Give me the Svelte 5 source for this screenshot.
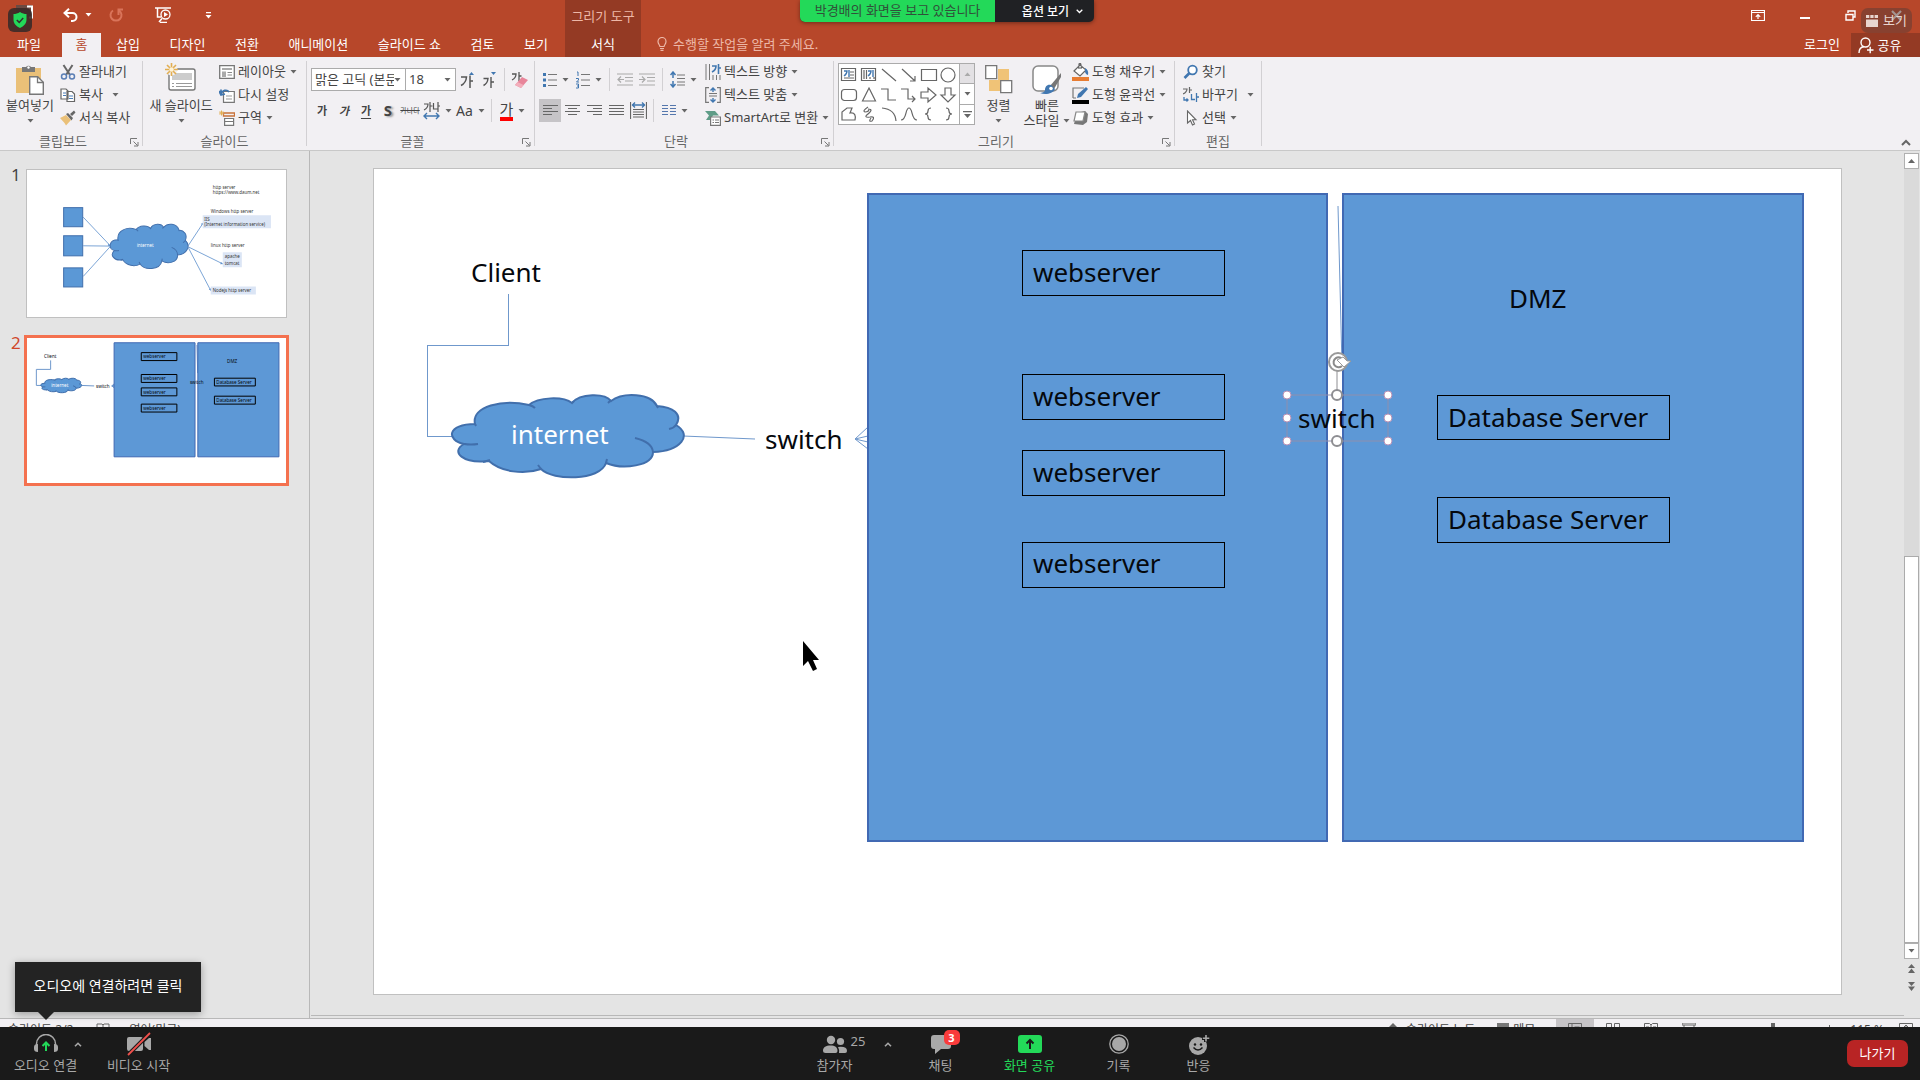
<script>
  const tabsBefore = ['삽입', '디자인', '전환', '애니메이션', '슬라이드 쇼', '검토', '보기'];
  const webservers = [
    { y: 249, h: 45, base: 281 },
    { y: 373, h: 45, base: 405 },
    { y: 449, h: 45, base: 481 },
    { y: 541, h: 45, base: 572 }
  ];
  const databases = [
    { y: 394, h: 44, base: 426 },
    { y: 496, h: 45, base: 528 }
  ];
  const handles = [
    [1286, 394], [1387, 394], [1286, 417], [1387, 417], [1286, 440], [1387, 440]
  ];
  let fontName = $state('malgun');
  let fontSize = $state('18');
</script>

{#snippet caret()}
  <svg class="caret" width="7" height="4" viewBox="0 0 7 4" aria-hidden="true"><path d="M0.5 0h6L3.5 3.6z" fill="currentColor" /></svg>
{/snippet}

{#snippet launcher(label)}
  <button class="launcher" aria-label={label}>
    <svg width="9" height="9" viewBox="0 0 9 9"><path d="M.5 6V.5H7M3.500 3.500l4 4M8 4v4H4" fill="none" stroke="#777" /></svg>
  </button>
{/snippet}

{#snippet cloud()}
  <path class="cloud" d="M474 423C446 423 445 439 463 443C449 451 462 463 488 460C500 471 523 474 540 468C552 480 599 480 605 462C622 469 652 465 652 451C680 450 692 434 675 424C682 413 672 406 656 405C650 392 622 391 610 400C604 392 579 392 571 402C562 395 537 396 528 404C502 398 470 405 474 423Z" />
  <path class="cloud inner" d="M528 404q4 1 6 3M463 443q7 1 14 0M482 461l7-2M537 464l3 4M605 462l1-4M668 428q5-1 7-4M634 437q17 4 18 14M571 402l2-2M607 402l3-3M656 405l1 2M474 423l1 2" />
{/snippet}

{#snippet diagram()}
  <polyline class="wire" points="507,293 507,344 426,344 426,435 453,435" />
  <path class="wire" d="M682 435L754 438M867 426L854 438L867 448M867 435L854 438L867 441" />
  <path class="wire" d="M1337 205L1341 365" />
  {@render cloud()}
  <text x="470" y="281">Client</text>
  <text class="light" x="510" y="443">internet</text>
  <text x="764" y="448">switch</text>
  <rect class="zone" x="867" y="193" width="459" height="647" />
  <rect class="zone" x="1342" y="193" width="460" height="647" />
  {#each webservers as s}
    <rect class="node" x="1021" y={s.y} width="202" height={s.h} />
    <text x="1032" y={s.base}>webserver</text>
  {/each}
  <text x="1508" y="307">DMZ</text>
  {#each databases as s}
    <rect class="node" x="1436" y={s.y} width="232" height={s.h} />
    <text x="1447" y={s.base}>Database Server</text>
  {/each}
  <text x="1297" y="427">switch</text>
{/snippet}

<div class="app">
  <header>
    <div class="quick">
      <button class="save" aria-label="저장">
        <svg width="20" height="24" viewBox="0 0 20 24"><path d="M2 2h16v12H2z" fill="#6b4a42" /><path d="M13 3.500h5v11h-3" fill="none" stroke="#fff" stroke-width="2" /></svg>
      </button>
      <button class="undo" aria-label="실행 취소">
        <svg width="16" height="15" viewBox="0 0 16 15"><path d="M2 5h7.500a4 4 0 0 1 0 8H8" fill="none" stroke="#fff" stroke-width="2" /><path d="M6 .8L1.500 5 6 9.200" fill="none" stroke="#fff" stroke-width="2" /></svg>
      </button>
      <button class="mini" aria-label="실행 취소 목록">{@render caret()}</button>
      <button class="redo" aria-label="다시 실행">
        <svg width="15" height="15" viewBox="0 0 15 15"><path d="M10 2.500A5.500 5.500 0 1 1 4 2.500M9.500 7V1.500H14" fill="none" stroke="#d9745a" stroke-width="2" /></svg>
      </button>
      <button class="show" aria-label="처음부터 시작">
        <svg width="17" height="16" viewBox="0 0 17 16"><path d="M0 1h16M2.500 1v9H6M4 15l3-3.500M12 15.500H5" fill="none" stroke="#fff" stroke-width="1.500" /><circle cx="10.500" cy="7.500" r="4.500" fill="#b7472a" stroke="#fff" stroke-width="1.300" /><path d="M9 5l4 2.500L9 10z" fill="#fff" /></svg>
      </button>
      <button class="custom" aria-label="빠른 실행 도구 모음 사용자 지정">
        <svg width="7" height="7" viewBox="0 0 7 7"><path d="M1 0h5v1.200H1zM.5 3h6L3.500 6.500z" fill="#fff" /></svg>
      </button>
    </div>
    <nav class="tabs" aria-label="리본 탭">
      <button class="tab file">파일</button>
      <button class="tab active">홈</button>
      {#each tabsBefore as t}<button class="tab">{t}</button>{/each}
    </nav>
    <div class="context">
      <span>그리기 도구</span>
      <button>서식</button>
    </div>
    <div class="window">
      <button aria-label="리본 메뉴 표시 옵션"><svg width="14" height="11" viewBox="0 0 14 11"><path d="M.5.5h13v10H.5zM0 2.500h14M7 9V5M4.800 6.800L7 4.600l2.200 2.200" fill="none" stroke="#fff" stroke-width="1.200" /></svg></button>
      <button aria-label="최소화"><svg width="10" height="11" viewBox="0 0 10 11"><path d="M0 7h10v2H0z" fill="#fff" /></svg></button>
      <button aria-label="이전 크기로 복원"><svg width="11" height="11" viewBox="0 0 11 11"><path d="M3 3V1h7v6H8M1 4.500h7V10H1z" fill="none" stroke="#fff" stroke-width="1.400" /></svg></button>
      <button aria-label="닫기"><svg width="11" height="11" viewBox="0 0 11 11"><path d="M1 1l9 9M10 1l-9 9" stroke="#eee" stroke-width="2.200" /></svg></button>
    </div>
    <div class="tellrow">
      <button class="tell">
        <svg width="12" height="14" viewBox="0 0 12 14"><path d="M4 9.500C3.500 7.500 2 7 2 4.500a4 4 0 0 1 8 0C10 7 8.500 7.500 8 9.500zM4 11.500h4M4.500 13.300h3" fill="none" stroke="#edb8a8" stroke-width="1.200" /></svg>
        수행할 작업을 알려 주세요.
      </button>
      <button class="login">로그인</button>
      <button class="share">
        <svg width="16" height="17" viewBox="0 0 16 17"><circle cx="7.500" cy="5.500" r="4.500" fill="none" stroke="#fff" stroke-width="1.400" /><path d="M1 16c0-4 2-6 5-6.500M9 13h6.500M12.200 9.800v6.500" fill="none" stroke="#fff" stroke-width="1.400" /></svg>
        공유
      </button>
    </div>
    <div class="banner">
      <span class="watching">박경배의 화면을 보고 있습니다</span>
      <button>옵션 보기 <svg width="7" height="5" viewBox="0 0 7 5"><path d="M.7.7l2.800 2.800L6.300.7" fill="none" stroke="#fff" stroke-width="1.300" /></svg></button>
    </div>
    <div class="shield">
      <svg width="16" height="16" viewBox="0 0 16 16" role="img" aria-label="암호화됨"><path d="M8 0C10 1.500 12.500 2 14.500 2v5.500c0 4-2.500 6.500-6.500 8.500C4 14 1.500 11.500 1.500 7.500V2C3.500 2 6 1.500 8 0z" fill="#23d959" /><path d="M4.800 8l2.400 2.400 4-4.300" fill="none" stroke="#33302f" stroke-width="1.500" /></svg>
    </div>
    <button class="viewbtn">
      <svg width="12" height="12" viewBox="0 0 12 12"><path d="M0 0h3.300v3H0zM4.300 0h3.300v3H4.300zM8.600 0H12v3H8.600zM0 4.500h12V12H0z" fill="#e8d5cf" /></svg>
      보기
    </button>
  </header>

  <section class="ribbon" aria-label="리본">
    <div class="group clip">
      <div class="body">
        <button class="large">
          <svg width="30" height="32" viewBox="0 0 30 32"><path d="M1 5h25v25H1z" fill="#eac078" /><path d="M7 4h4a3 3 0 0 1 5 0h4v5H7z" fill="#777" /><circle cx="13.500" cy="4.500" r="1.200" fill="#fff" /><path d="M14.700 13.700h8l5.600 5.600v12H14.700z" fill="#fff" stroke="#777" stroke-width="1.400" /><path d="M22.500 14v5.500h6" fill="none" stroke="#777" stroke-width="1.300" /></svg>
          <span>붙여넣기</span>{@render caret()}
        </button>
        <div class="stack">
          <button class="small"><svg width="16" height="16" viewBox="0 0 16 16"><path d="M3.500 1l6.500 10M12.500 1L6 11" stroke="#666" stroke-width="2" /><circle cx="4" cy="12.500" r="2.500" fill="none" stroke="#5b7fb5" stroke-width="1.500" /><circle cx="12" cy="12.500" r="2.500" fill="none" stroke="#5b7fb5" stroke-width="1.500" /></svg><span>잘라내기</span></button>
          <button class="small"><svg width="16" height="16" viewBox="0 0 16 16"><path d="M1 2h5l2 2v8H1zM7 4.500h5l2.500 2.500v7.500H7z" fill="#fff" stroke="#666" stroke-width="1.200" /><path d="M3 6h3M3 8.500h3M9 9h4M9 11.500h4" stroke="#4a7db8" /></svg><span>복사</span><i></i>{@render caret()}</button>
          <button class="small"><svg width="16" height="16" viewBox="0 0 16 16"><path d="M0 8l6-3 5 5-5 5.500L4.500 13z" fill="#eac078" /><path d="M6 4l2-1 5 5-1.500 2.500zM10 4l4-3.500 1.500 2L12 6z" fill="#666" /></svg><span>서식 복사</span></button>
        </div>
      </div>
      <div class="title launch">클립보드{@render launcher('클립보드 옵션')}</div>
    </div>

    <div class="group slides">
      <div class="body">
        <button class="large">
          <svg width="32" height="32" viewBox="0 0 32 32"><rect x="4" y="6" width="26" height="21" rx="2" fill="#fff" stroke="#777" stroke-width="1.400" /><path d="M7 10h20v7H7z" fill="#ccc" /><path d="M7 20.500h2M11 20.500h16M7 23.500h2M11 23.500h16" stroke="#999" /><circle cx="6.500" cy="6.500" r="6" fill="#f2f0f3" /><path d="M6.500 0v13M0 6.500h13M2 2l9 9M11 2l-9 9" stroke="#e2ae52" stroke-width="1.600" /><circle cx="6.500" cy="6.500" r="2.200" fill="#fff3d6" /></svg>
          <span>새 슬라이드</span>{@render caret()}
        </button>
        <div class="stack">
          <button class="small"><svg width="16" height="16" viewBox="0 0 16 16"><path d="M.7 1.700h14.600v12.600H.7z" fill="#fff" stroke="#777" stroke-width="1.300" /><path d="M3 4h10v2H3zM3 7.500h4V13H3z" fill="#aaa" /><path d="M8.500 8.500H13M8.500 11H13" stroke="#888" /></svg><span>레이아웃</span>{@render caret()}</button>
          <button class="small"><svg width="16" height="16" viewBox="0 0 16 16"><path d="M4.500 4.500h10.800v10.800H4.500z" fill="#fff" stroke="#777" stroke-width="1.200" /><path d="M7 9h6M7 12h6" stroke="#999" /><path d="M2 8V2.500M2 7.500C3 3 8 2 10 5M0 4l2 4 4-1" fill="none" stroke="#4177b0" stroke-width="1.700" /></svg><span>다시 설정</span></button>
          <button class="small"><svg width="16" height="16" viewBox="0 0 16 16"><path d="M4.500 3h11v3h-11z" fill="none" stroke="#c8723a" stroke-width="1.300" /><path d="M5.600 8.500h9v6.800h-9zM5.600 11.500h9" fill="#fff" stroke="#777" stroke-width="1.200" /><path d="M0 3h5M2.500.5v5M.8 1.300l3.400 3.400M4.200 1.300L.8 4.700" stroke="#e2ae52" /></svg><span>구역</span>{@render caret()}</button>
        </div>
      </div>
      <div class="title">슬라이드</div>
    </div>

    <div class="group font">
      <div class="body">
        <div class="rows">
          <div class="row">
            <label class="combo name"><select aria-label="글꼴" bind:value={fontName}><option value="malgun">맑은 고딕 (본문)</option></select>{@render caret()}</label>
            <label class="combo size"><select aria-label="글꼴 크기" bind:value={fontSize}><option value="18">18</option></select>{@render caret()}</label>
            <button class="tool" aria-label="글꼴 크기 크게"><svg width="14" height="18" viewBox="0 0 14 18"><path d="M9 4l2.500-3L14 4z" fill="#4177b0" /><path d="M1 6h5.500Q6 12 1 14.500M10 4.500V17M10 10h3" fill="none" stroke="#555" stroke-width="1.500" /></svg></button>
            <button class="tool" aria-label="글꼴 크기 작게"><svg width="14" height="18" viewBox="0 0 14 18"><path d="M9 1h5l-2.500 3z" fill="#4177b0" /><path d="M1.500 7.500H6Q5.500 12.500 1.500 14.500M9 6v11M9 11h3" fill="none" stroke="#555" stroke-width="1.400" /></svg></button>
            <span class="sep"></span>
            <button class="tool" aria-label="모든 서식 지우기"><svg width="18" height="18" viewBox="0 0 18 18"><path d="M1 3h4Q5 7 1 9M8 1v9M8 5h2.500" fill="none" stroke="#555" stroke-width="1.300" /><path d="M4 14l7-8 6 3-7 8z" fill="#e8859a" /><path d="M4 14l2.500-3 6 3-2.500 3z" fill="#f3aebb" /></svg></button>
          </div>
          <div class="row">
            <button class="tool b">가</button>
            <button class="tool b it">가</button>
            <button class="tool b un">가</button>
            <button class="tool sh">S</button>
            <button class="tool st">가나다</button>
            <button class="tool w33" aria-label="문자 간격"><svg width="17" height="19" viewBox="0 0 17 19"><path d="M1 3h4Q5 7 1 9M7 1v10M7 5h2.500M10.500 2v6h4M15 1v10M15 5h2" fill="none" stroke="#555" stroke-width="1.200" /><path d="M1 15h15M4 12l-3 3 3 3M13 12l3 3-3 3" fill="none" stroke="#4177b0" stroke-width="1.400" /></svg>{@render caret()}</button>
            <button class="tool w33 aa">Aa{@render caret()}</button>
            <span class="sep"></span>
            <button class="tool w33 color"><span>가</span>{@render caret()}</button>
          </div>
        </div>
      </div>
      <div class="title launch">글꼴{@render launcher('글꼴 옵션')}</div>
    </div>

    <div class="group para">
      <div class="body">
        <div class="rows">
          <div class="row">
            <button class="tool w33" aria-label="글머리 기호"><svg width="14" height="16" viewBox="0 0 14 16"><path d="M0 1h3v3H0zM0 6.500h3v3H0zM0 12h3v3H0z" fill="#4177b0" /><path d="M5 2.500h9M5 8h9M5 13.500h9" stroke="#777" /></svg>{@render caret()}</button>
            <button class="tool w33" aria-label="번호 매기기"><svg width="14" height="18" viewBox="0 0 14 18"><path d="M1 1h1v4M0 7.500h2.500V9L.5 11H3M0 13h2.500v4H0M1 15h1.500" fill="none" stroke="#4177b0" /><path d="M5 3.500h9M5 9h9M5 14.500h9" stroke="#777" /></svg>{@render caret()}</button>
            <span class="sep"></span>
            <button class="tool" aria-label="목록 수준 줄임"><svg width="16" height="13" viewBox="0 0 16 13"><path d="M0 1h16M8 4.500h8M8 8h8M0 12h16M1 6.500h6M4 3.500l-3 3 3 3" fill="none" stroke="#aaa" stroke-width="1.200" /></svg></button>
            <button class="tool" aria-label="목록 수준 늘림"><svg width="16" height="13" viewBox="0 0 16 13"><path d="M0 1h16M8 4.500h8M8 8h8M0 12h16M0 6.500h6M3 3.500l3 3-3 3" fill="none" stroke="#aaa" stroke-width="1.200" /></svg></button>
            <span class="sep"></span>
            <button class="tool w33" aria-label="줄 간격"><svg width="15" height="17" viewBox="0 0 15 17"><path d="M3 1v6M3 10v6M.5 4L3 1l2.500 3M.5 13L3 16l2.500-3" fill="none" stroke="#4177b0" stroke-width="1.500" /><path d="M7 4h8M7 7.500h8M7 11h8M7 14h8" stroke="#777" /></svg>{@render caret()}</button>
          </div>
          <div class="row">
            <button class="tool on" aria-label="왼쪽 맞춤"><svg width="15" height="13" viewBox="0 0 15 13"><path d="M0 1.500h15M0 4.500h9M0 7.500h15M0 10.500h9" stroke="#666" /></svg></button>
            <button class="tool" aria-label="가운데 맞춤"><svg width="15" height="13" viewBox="0 0 15 13"><path d="M0 1.500h15M3 4.500h9M0 7.500h15M3 10.500h9" stroke="#666" /></svg></button>
            <button class="tool" aria-label="오른쪽 맞춤"><svg width="15" height="13" viewBox="0 0 15 13"><path d="M0 1.500h15M6 4.500h9M0 7.500h15M6 10.500h9" stroke="#666" /></svg></button>
            <button class="tool" aria-label="양쪽 맞춤"><svg width="15" height="13" viewBox="0 0 15 13"><path d="M0 1.500h15M0 4.500h15M0 7.500h15M0 10.500h15" stroke="#666" /></svg></button>
            <button class="tool" aria-label="균등 분할"><svg width="17" height="17" viewBox="0 0 17 17"><path d="M.5 0v17M16.500 0v17M3 7.500h11M3 10h11M3 12.500h11M3 15h11" stroke="#666" stroke-width="1.200" /><path d="M2 3h13M5 .5L2.500 3 5 5.500M12 .5L14.500 3 12 5.500" fill="none" stroke="#4177b0" stroke-width="1.400" /></svg></button>
            <span class="sep"></span>
            <button class="tool w33" aria-label="열"><svg width="14" height="13" viewBox="0 0 14 13"><path d="M0 1.500h6M0 4.500h6M0 7.500h6M0 10.500h6M8 1.500h6M8 4.500h6M8 7.500h6M8 10.500h6" stroke="#5577ad" stroke-width="1.200" /></svg>{@render caret()}</button>
          </div>
        </div>
        <div class="stack">
          <button class="small"><svg width="16" height="16" viewBox="0 0 16 16"><path d="M1 0v16M4.500 0v16M8 11v5M11.500 11v5M15 11v5" stroke="#777" /><path d="M7 2h4Q11 6 7 8M13.500 0v10M13.500 4H16" fill="none" stroke="#4177b0" stroke-width="1.600" /></svg><span>텍스트 방향</span>{@render caret()}</button>
          <button class="small"><svg width="16" height="16" viewBox="0 0 16 16"><path d="M4 .7H.7v14.600H4M12 .7h3.300v14.600H12M4 6.500h8M4 9h8" fill="none" stroke="#777" stroke-width="1.200" /><path d="M8 1v4M8 11v4M5.500 3.500L8 1l2.500 2.500M5.500 12.500L8 15l2.500-2.500" fill="none" stroke="#4177b0" stroke-width="1.400" /></svg><span>텍스트 맞춤</span>{@render caret()}</button>
          <button class="small"><svg width="16" height="16" viewBox="0 0 16 16"><path d="M0 1h10l4 4.500H8L5 10H1l3-4.500z" fill="#5f9c87" /><path d="M5.600 7h9.800v8.400H5.600z" fill="#fff" stroke="#777" stroke-width="1.200" /><path d="M7.500 10h1.500M10 10h4M7.500 12.500h1.500M10 12.500h4" stroke="#777" /></svg><span>SmartArt로 변환</span>{@render caret()}</button>
        </div>
      </div>
      <div class="title launch">단락{@render launcher('단락 옵션')}</div>
    </div>

    <div class="group draw">
      <div class="body">
        <div class="gallery">
          <svg width="120" height="60" viewBox="0 0 120 60" role="img" aria-label="도형">
            <g fill="none" stroke="#666" stroke-width="1.200">
              <path d="M2.500 4.500h14v12h-14zM11 8h4M11 11h4M5 14h10M22.500 4.500h14v12h-14zM25 6v9M27.500 6v9M35 13v2M31 13v2" />
              <path d="M43 5l14 12M63 5l13 12M76 12v5h-5M82.500 5.500h15v11h-15z" /><circle cx="109" cy="11" r="7" />
              <rect x="2.500" y="25.500" width="15" height="11" rx="3" /><path d="M30 24l6.500 13h-13zM42 25h7v11h8M62 25h7v10h7M73 32l3 3-3 3" />
              <path d="M82 28h7v-4l8 7-8 7v-4h-7zM106 24h6v7h4l-7 7-7-7h4z" />
              <path d="M3 56V48l5-4h5l-2 5c5-1 6 3 5 7zM29 43q-6 4-3 5 4 0 4-3M29 45q6 0 0 5-5 4 2 3 6-1 2 4-4 1-1-3M43 44q13 1 14 13M62 56c6 0 4-12 8-12s2 12 8 12" />
              <path d="M92 44q-3 0-3 3 0 3-3 3 3 0 3 3 0 3 3 3M107 44q3 0 3 3 0 3 3 3-3 0-3 3 0 3-3 3" />
            </g>
            <path d="M5 7h3Q8 10 5 12M10 6v7M29 7h3Q32 10 29 12M34 6v7" fill="none" stroke="#4177b0" stroke-width="1.400" />
          </svg>
          <div class="gscroll">
            <button class="off" aria-label="이전 행"><svg width="7" height="4" viewBox="0 0 7 4"><path d="M.5 4h6L3.500.4z" fill="#aaa" /></svg></button>
            <button aria-label="다음 행">{@render caret()}</button>
            <button aria-label="자세히"><svg width="9" height="7" viewBox="0 0 9 7"><path d="M0 0h9v1.200H0zM1 3h7L4.500 7z" fill="#666" /></svg></button>
          </div>
        </div>
        <button class="large arrange">
          <svg width="28" height="32" viewBox="0 0 28 32"><path d="M13 6h11v12H13zM4 17h12v11H4z" fill="#f0c377" /><path d="M.7 2.700h11v13H.7zM15.700 17.700h11v12h-11z" fill="#fff" stroke="#777" stroke-width="1.300" /></svg>
          <span>정렬</span>{@render caret()}
        </button>
        <button class="large quick-style">
          <svg width="30" height="32" viewBox="0 0 30 32"><rect x="1" y="3" width="25" height="25" rx="5" fill="#fff" stroke="#888" stroke-width="1.500" /><path d="M29 10L18 23l4 3 7-12z" fill="#777" /><path d="M19 22c-4-1-6 2-6 5 0 2-3 3-5 3 5 2 13 1 15-4z" fill="#4177b0" /><circle cx="19" cy="25.500" r="1.800" fill="#fff" /></svg>
          <span>빠른</span><span class="line2">스타일{@render caret()}</span>
        </button>
        <div class="stack">
          <button class="small"><svg width="17" height="18" viewBox="0 0 17 18"><path d="M0 14h17v4H0z" fill="#e87d33" /><path d="M2 8l6-6 6 5-6 6zM7 6V1q1.500-2 2 1v4" fill="#fff" stroke="#666" stroke-width="1.200" /><path d="M13 5q4 2 3 7-3-1-3-4z" fill="#4177b0" /></svg><span>도형 채우기</span>{@render caret()}</button>
          <button class="small"><svg width="17" height="18" viewBox="0 0 17 18"><path d="M0 14h17v4H0z" fill="#000" /><path d="M1 12V2h11M1 12h3" fill="none" stroke="#777" stroke-width="1.200" /><path d="M5 12l1-4 8-7 2 2-7 8z" fill="#4177b0" /></svg><span>도형 윤곽선</span>{@render caret()}</button>
          <button class="small"><svg width="17" height="16" viewBox="0 0 17 16"><path d="M5 3l8-2 3 3-1 8-4 3-9-1z" fill="#777" /><path d="M4 2h9l-2 9-9 0z" fill="#fff" stroke="#888" stroke-width="1.200" /></svg><span>도형 효과</span>{@render caret()}</button>
        </div>
      </div>
      <div class="title launch">그리기{@render launcher('그리기 옵션')}</div>
    </div>

    <div class="group edit">
      <div class="body">
        <div class="stack">
          <button class="small"><svg width="16" height="16" viewBox="0 0 16 16"><circle cx="9.500" cy="6" r="4.300" fill="#fff" stroke="#4177b0" stroke-width="1.800" /><path d="M6.500 9L1.500 14" stroke="#4177b0" stroke-width="2.600" /></svg><span>찾기</span></button>
          <button class="small"><svg width="16" height="16" viewBox="0 0 16 16"><path d="M0 2h4Q4 5 0 7M6.500 0v6M6.500 3H9" fill="none" stroke="#666" stroke-width="1.200" /><path d="M8.500 7v5.500H12M13.500 6v9M13.500 10H16M1 10v3h4M3.500 11.500L5 13l-1.500 1.500" fill="none" stroke="#4177b0" stroke-width="1.300" /></svg><span>바꾸기</span><i></i>{@render caret()}</button>
          <button class="small"><svg width="16" height="16" viewBox="0 0 16 16"><path d="M4.500 1v12l3-2.500 2 4.500 2-1-2-4.200h3.500z" fill="#fff" stroke="#666" stroke-width="1.100" /></svg><span>선택</span>{@render caret()}</button>
        </div>
      </div>
      <div class="title">편집</div>
    </div>
    <button class="collapse" aria-label="리본 메뉴 축소"><svg width="10" height="7" viewBox="0 0 10 7"><path d="M1 6l4-4 4 4" fill="none" stroke="#666" stroke-width="2" /></svg></button>
  </section>

  <main>
    <aside aria-label="슬라이드 목록">
      <div class="thumb">
        <span>1</span>
        <button aria-label="슬라이드 1">
          <svg class="mini-slide" viewBox="270 1700 2580 1460">
            <g class="tw"><path d="M830 2170L1100 2455M830 2455L1100 2458M830 2760L1100 2462M1875 2455L2020 2235M1875 2465L2220 2635M1875 2470L2100 2900" /></g>
            <path d="M1100 2460l-25-8 8-20zM2023 2225l-22 12 18 12zM2222 2636l-20-20-6 22zM2104 2904l-22-14 20-12z" fill="#5b8fcc" />
            <g transform="translate(-407 124) scale(3.34 5.37)">{@render cloud()}</g>
            <rect class="tz" x="635" y="2075" width="190" height="190" /><rect class="tz" x="635" y="2355" width="190" height="200" /><rect class="tz" x="635" y="2675" width="190" height="190" />
            <path d="M2020 2150h680v130h-680zM2220 2520h190v150h-190zM2100 2860h450v80h-450z" fill="#dbe5f5" />
            <text class="light" x="1365" y="2472">internet</text>
            <text x="2120" y="1890">http server</text><text x="2120" y="1940">https://www.daum.net</text>
            <text x="2100" y="2130">Windows http server</text><text x="2035" y="2208">IIS</text><text x="2035" y="2262">(Internet information service)</text>
            <text x="2100" y="2472">linux http server</text><text x="2240" y="2580">apache</text><text x="2240" y="2650">tomcat</text><text x="2120" y="2918">Nodejs http server</text>
          </svg>
        </button>
      </div>
      <div class="thumb selected">
        <span>2</span>
        <button aria-label="슬라이드 2"><svg class="small-diagram" viewBox="373 166 1469 827">{@render diagram()}</svg></button>
      </div>
    </aside>
    <div class="stage">
      <svg class="slide" viewBox="373 168 1467 825" role="img" aria-label="네트워크 구성도">
        {@render diagram()}
        <path d="M1286 394H1387V440H1286z" fill="none" stroke="#8f8fae" />
        <path d="M1336 394V370" stroke="#8e8e92" />
        {#each handles as [x, y]}<circle cx={x} cy={y} r="4" fill="#fff" stroke="#b790b5" />{/each}
        <circle class="grip" cx="1336" cy="394" r="5" /><circle class="grip" cx="1336" cy="440" r="5" />
        <circle cx="1337" cy="361" r="9" fill="#fff" stroke="#999" stroke-width="2" />
        <path d="M1341 365a5 5 0 1 1 1-6" fill="none" stroke="#8a8a8a" stroke-width="2" />
        <path d="M1336 359l7 7 7-6h-4l-4-4z" fill="#fff" stroke="#999" />
        <path d="M802 640V665L807 660L812 670L816 668L812 659L818 659Z" />
      </svg>
    </div>
    <div class="scroll">
      <button aria-label="위로 스크롤"><svg width="7" height="4" viewBox="0 0 7 4"><path d="M0 4h7L3.500 0z" fill="#666" /></svg></button>
      <div class="track"><div class="thumbbar"></div></div>
      <button aria-label="아래로 스크롤">{@render caret()}</button>
      <button class="jump" aria-label="이전 슬라이드"><svg width="7" height="9" viewBox="0 0 7 9"><path d="M0 4h7L3.500 0zM0 9h7L3.500 4.500z" fill="#666" /></svg></button>
      <button class="jump" aria-label="다음 슬라이드"><svg width="7" height="9" viewBox="0 0 7 9"><path d="M0 0h7L3.500 4zM0 4.500h7L3.500 9z" fill="#666" /></svg></button>
    </div>
  </main>

  <div class="status">
    <div class="statusrow">
      <span>슬라이드 2/2</span>
      <svg class="spell" width="14" height="14" viewBox="0 0 14 14"><path d="M1 1h5l1 1 1-1h5v11H1zM7 2v10M9 4l3 3M12 4L9 7" fill="none" stroke="#666" /></svg>
      <span>영어(미국)</span>
      <span class="push"></span>
      <svg width="8" height="12" viewBox="0 0 8 12"><path d="M0 4L4 0l4 4zM0 7h8v1H0z" fill="#666" /></svg>
      <span class="notes">슬라이드 노트</span>
      <svg width="12" height="12" viewBox="0 0 12 12"><path d="M0 0h12v9H0z" fill="#777" /></svg>
      <span class="memo">메모</span>
      <span class="view cur"><svg width="14" height="14" viewBox="0 0 14 14"><path d="M.5.500h13v12H.5zM4 1v11M6.500 4h5v5h-5z" fill="none" stroke="#666" /></svg></span>
      <span class="view"><svg width="14" height="14" viewBox="0 0 14 14"><path d="M.5.500h5v5h-5zM8.500.500h5v5h-5z" fill="none" stroke="#666" /></svg></span>
      <span class="view"><svg width="14" height="14" viewBox="0 0 14 14"><path d="M.5.500h5L7 2 8.500.500h5v10H.500zM7 2v10M2 4h3M9 4h3" fill="none" stroke="#666" /></svg></span>
      <span class="view"><svg width="14" height="14" viewBox="0 0 14 14"><path d="M0 0h14v2H0zM2 2v6h10V2M4 4.500h6" fill="none" stroke="#666" /></svg></span>
      <svg class="knob" width="4" height="12" viewBox="0 0 4 12"><path d="M0 0h4v12H0z" fill="#666" /></svg>
      <svg class="plus" width="7" height="9" viewBox="0 0 7 9"><path d="M3 2h1v7H3z" fill="#666" /></svg>
      <span class="pct">115 %</span>
      <svg class="fit" width="14" height="14" viewBox="0 0 14 14"><path d="M.5.500h13v12H.5zM7 2v9M5 4l2-2 2 2" fill="none" stroke="#666" /></svg>
    </div>
  </div>

  <footer>
    <div class="left">
      <button class="zb audio">
        <span class="ic"><svg width="24" height="20" viewBox="0 0 24 20"><path d="M2.500 13V10a9.500 9.500 0 0 1 19 0v3" fill="none" stroke="#a8a8a8" stroke-width="1.500" /><path d="M0 13q0-3 4-3v8q-4 0-4-3zM24 13q0-3-4-3v8q4 0 4-3z" fill="#a8a8a8" /><path d="M12 17V9M8.500 12L12 8.500l3.500 3.500" fill="none" stroke="#23d959" stroke-width="2" /></svg></span>
        오디오 연결
      </button>
      <button class="up" aria-label="오디오 옵션"><svg width="8" height="5" viewBox="0 0 8 5"><path d="M1 4.300l3-3 3 3" fill="none" stroke="#a8a8a8" stroke-width="1.600" /></svg></button>
      <button class="zb video">
        <span class="ic"><svg width="26" height="24" viewBox="0 0 26 24"><path d="M1 7a2 2 0 0 1 2-2h12a2 2 0 0 1 2 2v10a2 2 0 0 1-2 2H3a2 2 0 0 1-2-2zM18.500 10l4.500-4h2v12h-2l-4.500-4z" fill="#a8a8a8" /><path d="M2 23L24 1" stroke="#1a1a1a" stroke-width="4" /><path d="M2 23L24 1" stroke="#f0504c" stroke-width="1.800" /></svg></span>
        비디오 시작
      </button>
    </div>
    <div class="center">
      <button class="zb part">
        <span class="ic"><svg width="24" height="19" viewBox="0 0 24 19"><circle cx="8" cy="5" r="4.200" fill="#a8a8a8" /><circle cx="17.500" cy="6.500" r="3.600" fill="#a8a8a8" /><path d="M0 16c0-4 3-5.500 7.500-5.500S14.500 12 14.500 16q0 2-2 2h-10Q0 18 0 16zM16 18q.800-3-1-6 9-1 9 4 0 2-2 2z" fill="#a8a8a8" /></svg><b class="count">25</b></span>
        참가자
      </button>
      <button class="up partup" aria-label="참가자 옵션"><svg width="8" height="5" viewBox="0 0 8 5"><path d="M1 4.300l3-3 3 3" fill="none" stroke="#a8a8a8" stroke-width="1.600" /></svg></button>
      <button class="zb">
        <span class="ic"><svg width="20" height="19" viewBox="0 0 20 19"><path d="M3 0h14a3 3 0 0 1 3 3v8a3 3 0 0 1-3 3h-7l-6 5v-5H3a3 3 0 0 1-3-3V3a3 3 0 0 1 3-3z" fill="#a8a8a8" /></svg><b class="badge">3</b></span>
        채팅
      </button>
      <button class="zb go">
        <span class="ic"><svg width="24" height="18" viewBox="0 0 24 18"><rect width="24" height="18" rx="3" fill="#23d959" /><path d="M12 14V5M8.500 8.500L12 5l3.500 3.500" fill="none" stroke="#1a1a1a" stroke-width="2" /></svg></span>
        화면 공유
      </button>
      <button class="zb">
        <span class="ic"><svg width="20" height="20" viewBox="0 0 20 20"><circle cx="10" cy="10" r="9.200" fill="none" stroke="#a8a8a8" stroke-width="1.300" /><circle cx="10" cy="10" r="7" fill="#a8a8a8" /></svg></span>
        기록
      </button>
      <button class="zb react">
        <span class="ic"><svg width="22" height="21" viewBox="0 0 22 21"><circle cx="10" cy="12" r="9" fill="#a8a8a8" /><circle cx="7" cy="10.500" r="1.200" fill="#1a1a1a" /><circle cx="13" cy="10.500" r="1.200" fill="#1a1a1a" /><path d="M5.500 13.500q4.500 5 9 0" fill="none" stroke="#1a1a1a" stroke-width="1.500" /><path d="M18 0v8M14 4h8" stroke="#1a1a1a" stroke-width="4" /><path d="M18 1v6.500M14.800 4.200h6.500" stroke="#a8a8a8" stroke-width="1.600" /></svg></span>
        반응
      </button>
    </div>
    <button class="leave">나가기</button>
    <div class="tip" role="tooltip">오디오에 연결하려면 클릭</div>
  </footer>
</div>

<style>
  :global(body) { background: #e4e4e4; }
  .app { display: flex; flex-direction: column; height: 100vh; min-width: 1400px; overflow: hidden; font: 13px/15px "Noto Sans", "Noto Sans CJK KR", sans-serif; color: #444; background: #e4e4e4; }
  button { font: inherit; color: inherit; background: none; border: 0; padding: 0; margin: 0; display: flex; align-items: center; justify-content: center; white-space: nowrap; }
  svg { display: block; flex: none; }
  .caret { color: #666; }

  header { position: relative; flex: none; display: grid; grid-template: 33px 24px / 565px 76px 1fr; background: #b7472a; color: #fff; }
  .quick { display: flex; align-items: center; padding: 0 0 3px 14px; }
  .quick .caret { color: #fff; }
  .save { width: 20px; }
  .undo { margin-left: 29px; }
  .mini { width: 18px; }
  .redo { margin-left: 12px; }
  .show { margin-left: 31px; }
  .custom { margin-left: 33px; }
  .tabs { grid-row: 2; grid-column: 1; display: flex; justify-content: space-between; padding: 0 2px 0 3px; }
  .tab { padding: 0 15px 2px 14px; }
  .tab.file { margin-right: 6px; }
  .tab.active { background: #f2f0f3; color: #b7472a; padding: 0 14px 2px 13px; }
  .context { grid-row: 1 / 3; grid-column: 2; display: flex; flex-direction: column; background: #943a24; color: #edb8a8; text-align: center; }
  .context span { line-height: 33px; }
  .context button { flex: 1; color: #fff; padding-bottom: 2px; }
  .window { grid-column: 3; grid-row: 1; display: flex; justify-content: flex-end; align-items: center; padding: 0 18px 2px 0; gap: 35px; }
  .tellrow { grid-column: 3; grid-row: 2; display: flex; }
  .tell { gap: 5px; padding: 0 0 2px 15px; color: #edb8a8; margin-right: auto; }
  .login { padding: 0 11px 2px; }
  .share { width: 69px; background: #943a24; gap: 4px; padding-right: 12px; }
  .banner { position: absolute; top: 0; left: 50%; margin-left: -160px; display: flex; height: 22px; border-radius: 0 0 5px 5px; overflow: hidden; background: #202124; box-shadow: 0 1px 4px #0006; }
  .watching { width: 195px; line-height: 21px; text-align: center; background: #23d959; color: #31503a; }
  .banner button { width: 99px; gap: 7px; padding-left: 16px; font-size: 12px; box-sizing: border-box; font-weight: 500; }
  .shield { position: absolute; left: 8px; top: 8px; width: 24px; height: 24px; border-radius: 6px; background: #3b2a28e6; display: grid; place-items: center; }
  .viewbtn { position: absolute; right: 8px; top: 8px; width: 51px; height: 25px; border-radius: 7px; background: #5a3c3680; gap: 5px; color: #e8d5cf; }

  .ribbon { flex: none; display: flex; background: #f2f0f3; border-bottom: 1px solid #c8c8c8; height: 93px; }
  .group { display: flex; flex-direction: column; border-right: 1px solid #d2d0d3; margin: 4px 0; box-sizing: border-box; }
  .body { flex: 1; min-height: 0; display: flex; margin-top: -4px; }
  .title { position: relative; line-height: 16px; height: 16px; text-align: center; color: #666; margin-bottom: -3px; }
  .launch { padding-right: 16px; }
  .launcher { position: absolute; right: 3px; top: 5px; }
  .clip { width: 143px; }
  .slides { width: 164px; }
  .font { width: 228px; }
  .para { width: 299px; }
  .draw { width: 341px; }
  .edit { width: 87px; }
  .large { flex-direction: column; justify-content: flex-start; padding-top: 6px; width: 60px; gap: 3px; }
  .large .caret { margin-top: 3px; }
  .slides .large { width: 76px; }
  .line2 { display: flex; align-items: center; gap: 4px; margin-top: -3px; }
  .large .line2 .caret { margin: 0; }
  .stack { display: flex; flex-direction: column; padding-top: 3px; align-items: flex-start; }
  .small { height: 23px; gap: 3px; }
  .small .caret { margin-left: 1px; }
  .small i { width: 2px; }
  .rows { display: flex; flex-direction: column; gap: 8px; padding: 11px 0 0 4px; }
  .row { display: flex; height: 23px; }
  .tool { width: 22px; color: #444; }
  .w33 { width: 33px; gap: 5px; }
  .on { background: #c6c4c7; }
  .sep { width: 1px; background: #d2d0d3; margin: 0 4px; }
  .combo { display: flex; align-items: center; box-sizing: border-box; background: #fff; border: 1px solid #ababab; height: 23px; padding-right: 4px; }
  .combo select { appearance: none; border: 0; background: none; padding: 0 0 0 3px; font: inherit; color: #444; flex: 1; min-width: 0; height: 20px; overflow: hidden; }
  .combo.name { width: 95px; }
  .combo.size { width: 51px; margin-left: -1px; }
  .b { font-size: 11px; font-weight: 700; }
  .it { font-style: italic; }
  .un { text-decoration: underline; text-underline-offset: 3px; }
  .sh { font-size: 15px; font-weight: 700; text-shadow: 2px 1px 2px #999; }
  .st { font-size: 7px; text-decoration: line-through; }
  .aa { font-size: 14px; }
  .color span { border-bottom: 4px solid #f00; font-size: 15px; line-height: 16px; }
  .para .rows { width: 166px; }
  .draw .body { padding-left: 4px; }
  .gallery { display: flex; margin-top: 6px; height: 62px; border: 1px solid #ababab; box-sizing: border-box; background: #fff; width: 137px; }
  .gscroll { flex: 1; border-left: 1px solid #ababab; display: flex; flex-direction: column; }
  .gscroll button { flex: 1; }
  .gscroll button + button { border-top: 1px solid #ababab; }
  .off { background: #e3e1e4; }
  .arrange { width: 47px; }
  .quick-style { width: 50px; }
  .edit .stack { padding-left: 8px; }
  .collapse { margin: auto 9px 4px auto; }

  main { flex: 1; display: flex; min-height: 0; }
  aside { flex: none; width: 310px; box-sizing: border-box; padding: 16px 20px 0 11px; border-right: 1px solid #b8b8b8; }
  .thumb { display: flex; margin-bottom: 15px; }
  .thumb span { width: 13px; font-size: 17px; line-height: 16px; color: #444; }
  .thumb button { flex: 1; display: block; border: 3px solid transparent; }
  .thumb svg { width: 100%; height: auto; background: #fff; }
  .thumb:not(.selected) svg { outline: 1px solid #c0c0c0; }
  .thumb.selected span { color: #d0472a; }
  .selected button { border-color: #f4714f; }
  .stage { flex: 1; min-width: 0; padding: 17px 62px 20px 62px; display: flex; border-bottom: 1px solid #b8b8b8; margin: 0 0 2px 1px; }
  .slide { flex: 1; min-width: 0; height: auto; background: #fff; border: 1px solid #c0c0c0; box-sizing: border-box; }
  .slide text, .small-diagram text { font-size: 26px; fill: #05080d; }
  .mini-slide text { font-size: 44px; fill: #333; }
  .slide .light, .small-diagram .light, .mini-slide .light { fill: #fff; }
  .cloud { fill: #5b98d6; stroke: #416fac; stroke-width: 2; }
  .cloud.inner { fill: none; }
  .thumb .cloud { stroke-width: 1; vector-effect: non-scaling-stroke; }
  .wire { fill: none; stroke: #6f98cc; stroke-width: 1; vector-effect: non-scaling-stroke; }
  .zone { fill: #5d98d6; stroke: #4169b3; stroke-width: 2; }
  .thumb .zone, .thumb .node { stroke-width: 1; vector-effect: non-scaling-stroke; }
  .node { fill: none; stroke: #000; stroke-width: 1; }
  .slide .node, .slide .wire { shape-rendering: crispEdges; }
  .slide path.wire { shape-rendering: auto; }
  .tw { stroke: #5b8fcc; stroke-width: 8; }
  .tz { fill: #5b98d6; stroke: #416fac; stroke-width: 10; }
  .grip { fill: #fff; stroke: #8e8e92; stroke-width: 2; }
  .scroll { flex: none; width: 15px; margin-right: 1px; padding-top: 2px; display: flex; flex-direction: column; }
  .scroll button { height: 16px; background: #fff; border: 1px solid #b0b0b0; }
  .track { flex: 1; background: #dadada; display: flex; align-items: flex-end; }
  .thumbbar { width: 100%; height: 50%; box-sizing: border-box; background: #fff; border: 1px solid #ababab; }
  .scroll .jump { background: none; border: 0; height: 18px; }
  .scroll .jump:last-child { margin-bottom: 23px; }

  .status { flex: none; height: 8px; overflow: hidden; border-top: 1px solid #b8b8b8; background: #f2f0f3; }
  .statusrow { display: flex; height: 21px; line-height: 21px; font-size: 12px; padding: 0 7px 0 8px; }
  .statusrow svg { margin-top: 4px; }
  .spell { margin: 0 19px 0 23px; }
  .push { flex: 1; }
  .notes { margin: 0 22px 0 9px; }
  .memo { margin: 0 21px 0 4px; }
  .view { width: 38px; display: flex; justify-content: center; }
  .cur { background: #c6c4c7; }
  .knob { margin-left: 63px; }
  .plus { margin: 0 17px 0 51px; }
  .pct { margin-right: 15px; }

  footer { position: relative; flex: none; height: 53px; background: #1a1a1a; color: #a8a8a8; display: grid; grid-template-columns: 1fr auto 1fr; }
  .left, .center { display: flex; }
  .center { padding-left: 113px; }
  .zb { width: 89px; flex-direction: column; justify-content: flex-start; line-height: 17px; }
  .ic { position: relative; height: 24px; margin: 5px 0 1px; display: grid; place-items: center; }
  .audio { width: 91px; }
  .up { width: 20px; height: 34px; margin-left: -23px; }
  .video { width: 101px; }
  .part { width: 71px; }
  .center .partup { width: 35px; margin: 0 -9px 0 0; }
  .react { width: 71px; }
  .count { position: absolute; left: 28px; top: 1px; font-weight: 400; line-height: 16px; }
  .badge { position: absolute; left: 13px; top: -2px; width: 16px; height: 15px; border-radius: 5px; background: #f93b3b; color: #fff; font-size: 11px; line-height: 15px; text-align: center; }
  .go { color: #23d959; }
  .leave { justify-self: end; align-self: center; margin-right: 12px; width: 61px; height: 27px; border-radius: 7px; background: #b82424; color: #fff; }
  .tip { position: absolute; left: 15px; bottom: 68px; width: 186px; height: 50px; line-height: 48px; background: #232323; color: #fff; font-size: 14px; text-align: center; box-shadow: 0 2px 8px #0005; }
  .tip::after { content: ""; position: absolute; left: 23px; top: 50px; border: 8px solid transparent; border-top-color: #232323; border-bottom: 0; }
</style>
